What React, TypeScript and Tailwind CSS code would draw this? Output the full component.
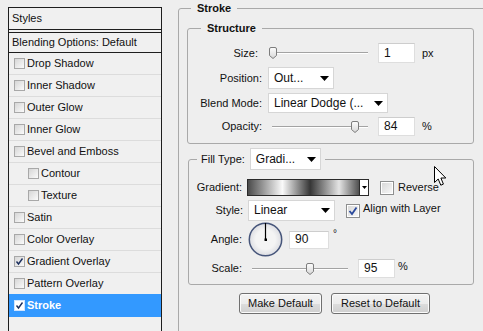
import React from 'react';

const Arrow = ({ w = 9, h = 5 }: { w?: number; h?: number }) => (
  <svg width={w} height={h} viewBox={`0 0 ${w} ${h}`} className="shrink-0">
    <polygon points={`0,0 ${w},0 ${w / 2},${h}`} fill="#000" />
  </svg>
);

const Dropdown = ({ text, className }: { text: string; className: string }) => (
  <div className={`flex items-center justify-between bg-white border border-[#d6d6d6] pl-[5px] pr-[4px] text-[12px] ${className}`}>
    <span className="whitespace-nowrap">{text}</span>
    <Arrow />
  </div>
);

const Field = ({ value, className }: { value: string; className: string }) => (
  <div className={`flex items-center bg-white border border-[#dedede] border-t-[#cdcdcd] pl-[5px] text-[12px] ${className}`}>
    {value}
  </div>
);

const Thumb = () => (
  <svg width="8" height="12" viewBox="0 0 8 12">
    <defs>
      <linearGradient id="tg" x1="0" x2="0" y1="0" y2="1">
        <stop offset="0" stopColor="#fdfdfd" />
        <stop offset="1" stopColor="#d6d6d6" />
      </linearGradient>
    </defs>
    <path d="M0.5 2 Q0.5 0.5 2 0.5 H6 Q7.5 0.5 7.5 2 V8.5 L4 11.5 L0.5 8.5 Z" fill="url(#tg)" stroke="#7d7d7d" />
  </svg>
);

const Slider = ({ thumb, className }: { thumb: string; className: string }) => (
  <div className={`relative flex items-center h-full ${className}`}>
    <div className="w-full h-[2px] border-t border-t-[#a3a3a3] border-b border-b-white" />
    <div className={`absolute top-1/2 -translate-y-1/2 ${thumb}`}>
      <Thumb />
    </div>
  </div>
);

const SmallCheck = ({ checked, selected }: { checked?: boolean; selected?: boolean }) => (
  <span
    className={`w-[11px] h-[11px] shrink-0 flex items-center justify-center border ${
      selected ? 'border-[#cfe4ff] bg-white' : 'border-[#a8a8a8] bg-gradient-to-br from-[#d6d6d6] to-[#fbfbfb]'
    }`}
  >
    {checked && (
      <svg width="9" height="9" viewBox="0 0 9 9">
        <path d="M1.5 4.5 L3.5 7 L7.5 1.5" fill="none" stroke="#1c2f5e" strokeWidth="1.4" />
      </svg>
    )}
  </span>
);

const VistaCheck = ({ checked, className }: { checked?: boolean; className: string }) => (
  <div className={`flex w-[14px] h-[14px] shrink-0 border border-[#8e8f8f] bg-white p-[1px] ${className}`}>
    <div className="flex-1 flex items-center justify-center bg-gradient-to-br from-[#d9d9d9] to-[#f7f7f7]">
      {checked && (
        <svg width="10" height="10" viewBox="0 0 10 10">
          <path d="M1.5 5 L4 8 L8.5 1.5" fill="none" stroke="#2b4a9c" strokeWidth="1.8" />
        </svg>
      )}
    </div>
  </div>
);

const styles: { name: string; indent?: boolean; checked?: boolean }[] = [
  { name: 'Drop Shadow' },
  { name: 'Inner Shadow' },
  { name: 'Outer Glow' },
  { name: 'Inner Glow' },
  { name: 'Bevel and Emboss' },
  { name: 'Contour', indent: true },
  { name: 'Texture', indent: true },
  { name: 'Satin' },
  { name: 'Color Overlay' },
  { name: 'Gradient Overlay', checked: true },
  { name: 'Pattern Overlay' },
];

export default function App() {
  return (
    <div className="relative w-[483px] h-[331px] overflow-hidden bg-[#eeeeee] text-[11px] leading-[13px] text-[#111] font-['Liberation_Sans',Arial,sans-serif] flex items-start">
      {/* styles list */}
      <div className="ml-[8px] mt-[7px] w-[154px] h-[340px] shrink-0 border border-[#1e1e1e] bg-[#f0f0f0]">
        <div className="h-[22px] flex items-center pl-[3px] border-b border-[#1e1e1e]">Styles</div>
        <div className="mt-[2px] h-[21px] flex items-center pl-[3px] border-t border-b border-[#1e1e1e]">
          Blending Options: Default
        </div>
        {styles.map((s) => (
          <div
            key={s.name}
            className={`h-[22px] flex items-center gap-[2px] border-b border-[#dcdcdc] ${s.indent ? 'pl-[19px]' : 'pl-[5px]'}`}
          >
            <SmallCheck checked={s.checked} />
            <span>{s.name}</span>
          </div>
        ))}
        <div className="-mt-[1px] h-[23px] flex items-center gap-[2px] pl-[5px] bg-[#3399ff] text-white font-bold">
          <SmallCheck checked selected />
          <span>Stroke</span>
        </div>
      </div>

      {/* stroke panel */}
      <fieldset className="ml-[16px] mt-[2px] w-[320px] h-[360px] shrink-0 min-w-0 border border-[#a9a9a9] rounded-[3px]">
        <legend className="ml-[12px] px-[6px] font-bold">Stroke</legend>

        <fieldset className="ml-[8px] mt-[7px] w-[287px] min-w-0 border border-[#a9a9a9] rounded-[3px] pb-[7px]">
          <legend className="ml-[13px] px-[6px] font-bold">Structure</legend>

          <div className="mt-[8px] h-[20px] flex items-center">
            <span className="w-[70px] text-right">Size:</span>
            <Slider className="ml-[14px] w-[96px]" thumb="-left-[3px]" />
            <Field value="1" className="ml-[10px] w-[37px] h-[20px]" />
            <span className="ml-[7px]">px</span>
          </div>
          <div className="mt-[4px] h-[22px] flex items-center">
            <span className="w-[74px] text-right">Position:</span>
            <Dropdown text="Out..." className="ml-[6px] w-[66px] h-[22px]" />
          </div>
          <div className="mt-[4px] h-[20px] flex items-center">
            <span className="w-[74px] text-right">Blend Mode:</span>
            <Dropdown text="Linear Dodge (..." className="ml-[6px] w-[120px] h-[20px]" />
          </div>
          <div className="mt-[4px] h-[19px] flex items-center">
            <span className="w-[74px] text-right">Opacity:</span>
            <Slider className="ml-[10px] w-[96px]" thumb="left-[79px]" />
            <Field value="84" className="ml-[10px] w-[37px] h-[19px]" />
            <span className="ml-[7px]">%</span>
          </div>
        </fieldset>

        <fieldset className="ml-[9px] mt-[4px] w-[286px] min-w-0 border border-[#a9a9a9] rounded-[3px] pb-[6px]">
          <legend className="ml-[8px] px-[4px] flex items-center">
            <span>Fill Type:</span>
            <Dropdown text="Gradi..." className="ml-[5px] w-[71px] h-[22px]" />
          </legend>

          <div className="mt-[9px] h-[17px] flex items-center">
            <span className="w-[53px] text-right">Gradient:</span>
            <div className="ml-[5px] w-[122px] h-[17px] flex border border-[#2a2a2a] bg-white">
              <div className="flex-1 bg-[linear-gradient(to_right,#4b4b4b_0%,#fafafa_31%,#363636_56%,#e4e4e4_82%,#505050_100%)]" />
              <div className="w-[9px] border-l border-[#2a2a2a] flex items-center justify-center">
                <Arrow w={5} h={3} />
              </div>
            </div>
            <VistaCheck className="ml-[11px]" />
            <span className="ml-[4px]">Reverse</span>
          </div>

          <div className="mt-[4px] h-[21px] flex items-center">
            <span className="w-[54px] text-right">Style:</span>
            <Dropdown text="Linear" className="ml-[5px] w-[87px] h-[21px]" />
            <VistaCheck checked className="ml-[11px]" />
            <span className="ml-[3px] -mt-[4px]">Align with Layer</span>
          </div>

          <div className="mt-[1px] h-[35px] flex items-center">
            <span className="w-[53px] text-right">Angle:</span>
            <svg width="35" height="35" viewBox="0 0 35 35" className="ml-[6px]">
              <defs>
                <radialGradient id="dg" cx="0.5" cy="0.5" r="0.5">
                  <stop offset="0.6" stopColor="#f4f4f4" />
                  <stop offset="1" stopColor="#dcdde2" />
                </radialGradient>
              </defs>
              <circle cx="17.5" cy="17.5" r="16.2" fill="url(#dg)" stroke="#46557a" strokeWidth="1.5" />
              <line x1="17.5" y1="17.5" x2="17.5" y2="1" stroke="#000" strokeWidth="1.2" />
              <rect x="16.5" y="16.5" width="2.5" height="2.5" fill="#000" />
            </svg>
            <Field value="90" className="ml-[6px] w-[40px] h-[18px]" />
            <span className="ml-[4px] -mt-[12px] text-[10px]">°</span>
          </div>

          <div className="mt-[2px] h-[19px] flex items-center">
            <span className="w-[53px] text-right">Scale:</span>
            <Slider className="ml-[10px] w-[96px]" thumb="left-[54px]" />
            <Field value="95" className="ml-[10px] w-[37px] h-[19px]" />
            <span className="ml-[3px] -mt-[4px]">%</span>
          </div>
        </fieldset>

        <div className="mt-[8px] ml-[60px] flex gap-[9px]">
          <button className="w-[83px] h-[21px] rounded-[3px] border border-[#707070] shadow-[inset_0_0_0_1px_#fbfbfb] bg-[linear-gradient(#f3f3f3_0%,#ececec_50%,#dddddd_51%,#cfcfcf_100%)] text-[11px]">
            Make Default
          </button>
          <button className="w-[99px] h-[21px] rounded-[3px] border border-[#707070] shadow-[inset_0_0_0_1px_#fbfbfb] bg-[linear-gradient(#f3f3f3_0%,#ececec_50%,#dddddd_51%,#cfcfcf_100%)] text-[11px]">
            Reset to Default
          </button>
        </div>
      </fieldset>

      {/* mouse pointer */}
      <svg width="14" height="22" viewBox="0 0 14 22" className="absolute left-[434px] top-[166px]">
        <path d="M0.5 0.5 V16.5 L4.2 13 L6.8 19.2 L9.4 18.1 L6.9 12 H11.8 Z" fill="#fff" stroke="#000" strokeLinejoin="round" />
      </svg>
    </div>
  );
}
